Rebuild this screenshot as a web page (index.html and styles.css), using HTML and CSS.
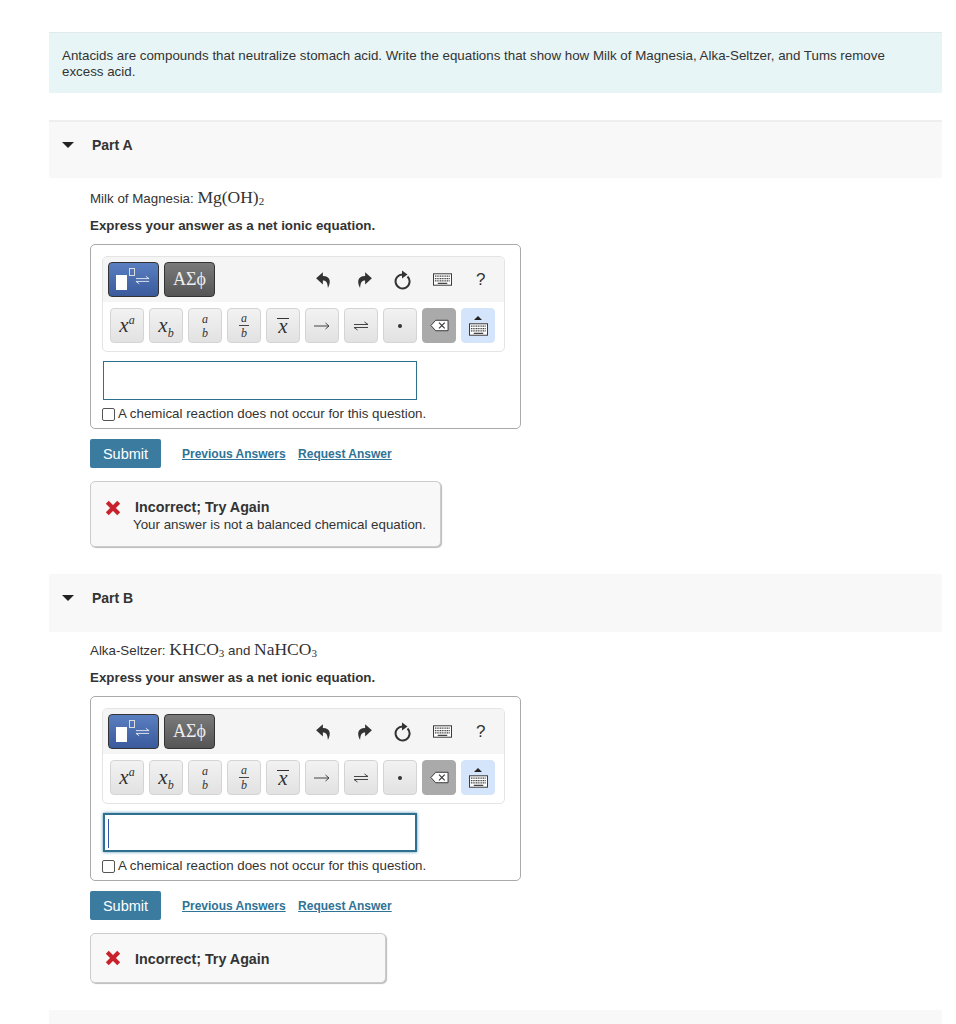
FILE: index.html
```html
<!DOCTYPE html>
<html lang="en">
<head>
  <meta charset="UTF-8" />
  <title>Antacids</title>
  <link rel="stylesheet" href="styles.css">
</head>
<body>
<svg class="defs" width="0" height="0">
  <defs>
    <symbol id="kbd" viewBox="0 0 20 13">
      <rect x="0.5" y="0.5" width="19" height="12" fill="#fff" stroke="#333"/>
      <path d="M2 3h16M2 5.500h16M2 8h16" stroke="#444" stroke-width="1.3" stroke-dasharray="1.2 .6" fill="none"/>
      <path d="M5 10.500h10" stroke="#444" stroke-width="1.3"/>
    </symbol>
    <symbol id="equil" viewBox="0 0 16 10">
      <path d="M1 3.500h14L11.500 1M15 6.500H1L4.500 9" stroke="#444" stroke-width="1" fill="none"/>
    </symbol>
    <symbol id="equil-light" viewBox="0 0 16 10">
      <path d="M1 3.500h14L11.500 1M15 6.500H1L4.500 9" stroke="#e4e8f2" stroke-width="1" fill="none"/>
    </symbol>
    <symbol id="undo" viewBox="0 0 16 16">
      <path d="M7 1L1 6.500 7 12V8.500c2.500 0 4 1 4.500 6.500C14 11 14.500 4.500 7 4.500z" fill="#333"/>
    </symbol>
    <symbol id="reset" viewBox="0 0 18 20">
      <path d="M13.500 6.500A7 7 0 1 1 9 4.500" fill="none" stroke="#333" stroke-width="2"/>
      <path d="M8 0.500v8l5.500-4z" fill="#333"/>
    </symbol>
  </defs>
</svg>

<div class="page">
  <div class="intro">Antacids are compounds that neutralize stomach acid. Write the equations that show how Milk of Magnesia, Alka-Seltzer, and Tums remove excess acid.</div>

  <!-- Part A -->
  <div class="part-head"><span class="caret"></span><span class="part-title">Part A</span></div>
  <div class="part-body">
    <p class="prompt">Milk of Magnesia: <span class="math">Mg(OH)<sub>2</sub></span></p>
    <p class="express">Express your answer as a net ionic equation.</p>
    <div class="answer-box">
      <div class="palette">
        <div class="tool-row">
          <div class="tab tab-blue"><span class="big-sq"></span><span class="small-sq"></span><svg class="tab-equil"><use href="#equil-light"/></svg></div>
          <div class="tab tab-grey">ΑΣϕ</div>
          <div class="tool-icons">
            <svg class="ic-undo"><use href="#undo"/></svg>
            <svg class="ic-undo flip"><use href="#undo"/></svg>
            <svg class="ic-reset"><use href="#reset"/></svg>
            <svg class="ic-kbd"><use href="#kbd"/></svg>
            <span class="ic-help">?</span>
          </div>
        </div>
        <div class="key-row">
          <div class="key"><i>x<sup>a</sup></i></div>
          <div class="key"><i>x<sub>b</sub></i></div>
          <div class="key"><span class="stack"><i>a</i><i>b</i></span></div>
          <div class="key"><span class="stack bar"><i>a</i><i>b</i></span></div>
          <div class="key"><i class="over">x</i></div>
          <div class="key"><svg class="ar" viewBox="0 0 16 10"><path d="M0 5h15M11.500 2L15 5l-3.500 3" stroke="#444" fill="none"/></svg></div>
          <div class="key"><svg class="ar"><use href="#equil"/></svg></div>
          <div class="key"><span class="dot"></span></div>
          <div class="key key-del"><svg class="del" viewBox="0 0 20 13"><path d="M6 1h13v11H6L1 6.500z" fill="#fff" stroke="#333"/><path d="M9.500 3.500l6 6M15.500 3.500l-6 6" stroke="#333" stroke-width="1.200"/></svg></div>
          <div class="key key-kb"><span class="up"></span><svg class="ic-kbd"><use href="#kbd"/></svg></div>
        </div>
      </div>
      <div class="input"></div>
      <label class="no-rxn"><span class="check"></span>A chemical reaction does not occur for this question.</label>
    </div>
    <div class="actions">
      <button class="submit">Submit</button>
      <a class="link" href="#">Previous Answers</a>
      <a class="link" href="#">Request Answer</a>
    </div>
    <div class="feedback">
      <svg class="cross" viewBox="0 0 14 14"><path d="M2 2l10 10M12 2L2 12" stroke="#c8232c" stroke-width="3.600"/></svg>
      <div class="fb-body">
        <div class="fb-title">Incorrect; Try Again</div>
        <div class="fb-text">Your answer is not a balanced chemical equation.</div>
      </div>
    </div>
  </div>

  <!-- Part B -->
  <div class="part-head no-line"><span class="caret"></span><span class="part-title">Part B</span></div>
  <div class="part-body tight">
    <p class="prompt">Alka-Seltzer: <span class="math">KHCO<sub>3</sub></span> and <span class="math">NaHCO<sub>3</sub></span></p>
    <p class="express">Express your answer as a net ionic equation.</p>
    <div class="answer-box">
      <div class="palette">
        <div class="tool-row">
          <div class="tab tab-blue"><span class="big-sq"></span><span class="small-sq"></span><svg class="tab-equil"><use href="#equil-light"/></svg></div>
          <div class="tab tab-grey">ΑΣϕ</div>
          <div class="tool-icons">
            <svg class="ic-undo"><use href="#undo"/></svg>
            <svg class="ic-undo flip"><use href="#undo"/></svg>
            <svg class="ic-reset"><use href="#reset"/></svg>
            <svg class="ic-kbd"><use href="#kbd"/></svg>
            <span class="ic-help">?</span>
          </div>
        </div>
        <div class="key-row">
          <div class="key"><i>x<sup>a</sup></i></div>
          <div class="key"><i>x<sub>b</sub></i></div>
          <div class="key"><span class="stack"><i>a</i><i>b</i></span></div>
          <div class="key"><span class="stack bar"><i>a</i><i>b</i></span></div>
          <div class="key"><i class="over">x</i></div>
          <div class="key"><svg class="ar" viewBox="0 0 16 10"><path d="M0 5h15M11.500 2L15 5l-3.500 3" stroke="#444" fill="none"/></svg></div>
          <div class="key"><svg class="ar"><use href="#equil"/></svg></div>
          <div class="key"><span class="dot"></span></div>
          <div class="key key-del"><svg class="del" viewBox="0 0 20 13"><path d="M6 1h13v11H6L1 6.500z" fill="#fff" stroke="#333"/><path d="M9.500 3.500l6 6M15.500 3.500l-6 6" stroke="#333" stroke-width="1.200"/></svg></div>
          <div class="key key-kb"><span class="up"></span><svg class="ic-kbd"><use href="#kbd"/></svg></div>
        </div>
      </div>
      <div class="input focused"><span class="cursor"></span></div>
      <label class="no-rxn"><span class="check"></span>A chemical reaction does not occur for this question.</label>
    </div>
    <div class="actions">
      <button class="submit">Submit</button>
      <a class="link" href="#">Previous Answers</a>
      <a class="link" href="#">Request Answer</a>
    </div>
    <div class="feedback short">
      <svg class="cross" viewBox="0 0 14 14"><path d="M2 2l10 10M12 2L2 12" stroke="#c8232c" stroke-width="3.600"/></svg>
      <div class="fb-title">Incorrect; Try Again</div>
    </div>
  </div>

  <div class="part-head no-line"></div>
</div>
</body>
</html>
```

FILE: styles.css
```css
body {
  margin: 0;
  font-family: "Liberation Sans", Arial, sans-serif;
  color: #333;
  background: #fff;
}
.defs {
  display: block;
  height: 0;
}
.page {
  width: 893px;
  margin-left: 49px;
  padding-top: 32px;
}
.intro {
  background: #e8f5f6;
  border-top: 1px solid #e0eaeb;
  padding: 14.5px 50px 12.5px 13px;
  font-size: 13.33px;
  line-height: 16.5px;
  margin-bottom: 27px;
}
.part-head {
  display: flex;
  align-items: center;
  height: 58px;
  padding-bottom: 10px;
  box-sizing: border-box;
  background: #f8f8f8;
  border-top: 2px solid #eee;
}
.part-head.no-line {
  border-top: none;
  padding-bottom: 11px;
}
.caret {
  width: 0;
  height: 0;
  margin-left: 13px;
  border-left: 6px solid transparent;
  border-right: 6px solid transparent;
  border-top: 6px solid #222;
}
.part-title {
  margin-left: 18px;
  font-size: 14px;
  font-weight: bold;
}
.part-body {
  padding: 11px 0 27px 41px;
}
.part-body.tight {
  padding-top: 9px;
}
.prompt {
  margin: 0;
  height: 20px;
  font-size: 13.33px;
  line-height: 20px;
}
.math {
  font-family: "Liberation Serif", serif;
  font-size: 17.5px;
  line-height: 1;
}
.math sub {
  font-size: 11px;
  line-height: 0;
  vertical-align: -2px;
}
.express {
  margin: 8px 0 0;
  font-size: 13.33px;
  line-height: 17px;
  font-weight: bold;
}
.answer-box {
  width: 431px;
  height: 185px;
  box-sizing: border-box;
  margin-top: 10px;
  padding: 11px 16px 0 11px;
  border: 1px solid #aaa;
  border-radius: 5px;
}
.palette {
  width: 403px;
  height: 96px;
  box-sizing: border-box;
  border: 1px solid #e4e4e4;
  border-radius: 5px;
  overflow: hidden;
}
.tool-row {
  display: flex;
  align-items: center;
  height: 45px;
  padding-left: 5px;
  background: #f5f5f5;
}
.tab {
  width: 51px;
  height: 35px;
  box-sizing: border-box;
  margin-right: 5px;
  border: 1px solid #333;
  border-radius: 4px;
  color: #eee;
  position: relative;
}
.tab-blue {
  background: linear-gradient(#5a7fc0, #3a5a9c);
}
.tab-grey {
  background: linear-gradient(#7a7a7a, #555);
  font-family: "Liberation Serif", serif;
  font-size: 18px;
  line-height: 33px;
  text-align: center;
}
.big-sq {
  position: absolute;
  left: 7px;
  top: 12px;
  width: 11px;
  height: 15px;
  background: #fff;
}
.small-sq {
  position: absolute;
  left: 20px;
  top: 5px;
  width: 4px;
  height: 6px;
  border: 1px solid #ddd;
}
.tab-equil {
  position: absolute;
  left: 26px;
  top: 12px;
  width: 15px;
  height: 10px;
}
.tool-icons {
  display: flex;
  align-items: center;
  margin-left: 88px;
}
.ic-undo {
  width: 18px;
  height: 18px;
  margin: 0 10px 0 7px;
}
.flip {
  transform: scaleX(-1);
  margin-left: 12px;
  margin-right: 0;
}
.ic-reset {
  width: 18px;
  height: 20px;
  margin-left: 21px;
}
.ic-kbd {
  display: block;
  width: 19px;
  height: 13px;
}
.tool-icons .ic-kbd {
  margin-left: 21px;
}
.ic-help {
  margin-left: 24px;
  font-size: 17px;
}
.key-row {
  display: flex;
  gap: 5px;
  padding: 6px 0 0 7px;
}
.key {
  display: flex;
  align-items: center;
  justify-content: center;
  width: 34px;
  height: 35px;
  box-sizing: border-box;
  background: linear-gradient(#f2f2f2, #e2e2e2);
  border: 1px solid #d4d4d4;
  border-radius: 4px;
  font-family: "Liberation Serif", serif;
  font-size: 21px;
}
.key sup, .key sub {
  font-size: 12px;
  line-height: 0;
}
.stack {
  display: flex;
  flex-direction: column;
  align-items: center;
  font-size: 12px;
  line-height: 14px;
}
.stack.bar i:first-child {
  border-bottom: 1px solid #444;
  padding: 0 2px;
}
.over {
  border-top: 1px solid #333;
  line-height: 14px;
  padding: 0 1px;
}
.ar {
  width: 16px;
  height: 10px;
}
.dot {
  width: 4px;
  height: 4px;
  background: #333;
  border-radius: 50%;
}
.key-del {
  background: #aaa;
  border-color: #aaa;
}
.del {
  width: 19px;
  height: 13px;
}
.key-kb {
  flex-direction: column;
  background: #d4e4fa;
  border-color: #d4e4fa;
  gap: 3px;
}
.up {
  width: 0;
  height: 0;
  border-left: 4px solid transparent;
  border-right: 4px solid transparent;
  border-bottom: 4px solid #222;
}
.input {
  width: 314px;
  height: 39px;
  box-sizing: border-box;
  margin: 9px 0 0 1px;
  padding: 4px 3px;
  border: 1px solid #2f6f8f;
  background: #fff;
}
.input.focused {
  border-width: 2px;
  box-shadow: 0 0 3px #4a90b0;
}
.cursor {
  display: block;
  width: 1px;
  height: 29px;
  background: #3355aa;
}
.no-rxn {
  display: flex;
  align-items: center;
  margin-top: 6px;
  font-size: 13.33px;
  line-height: 16px;
}
.check {
  width: 11px;
  height: 11px;
  margin-right: 3px;
  border: 1px solid #555;
  border-radius: 2px;
}
.actions {
  display: flex;
  align-items: center;
  margin-top: 10px;
}
.submit {
  width: 71px;
  height: 29px;
  margin-right: 21px;
  padding: 0;
  background: #3b7ba0;
  border: none;
  border-radius: 2px;
  color: #fff;
  font-family: inherit;
  font-size: 14.5px;
}
.link {
  margin-right: 12.5px;
  color: #2f7396;
  font-size: 12px;
  font-weight: bold;
}
.feedback {
  display: flex;
  align-items: center;
  width: 351px;
  height: 66px;
  box-sizing: border-box;
  margin-top: 13px;
  padding-left: 14px;
  background: #f8f8f8;
  border: 1px solid #ccc;
  border-radius: 5px;
  box-shadow: 1px 1px 1px #bbb;
}
.feedback.short {
  width: 296px;
  height: 50px;
}
.cross {
  width: 16px;
  height: 16px;
  margin-right: 14px;
  align-self: flex-start;
  margin-top: 18px;
}
.short .cross {
  align-self: center;
  margin-top: 0;
}
.fb-body {
  padding-top: 4px;
}
.fb-title {
  font-size: 14.3px;
  font-weight: bold;
  line-height: 17px;
}
.short .fb-title {
  padding-top: 2px;
}
.fb-text {
  margin-top: 1px;
  margin-left: -2px;
  font-size: 13.33px;
  line-height: 16px;
}
```
